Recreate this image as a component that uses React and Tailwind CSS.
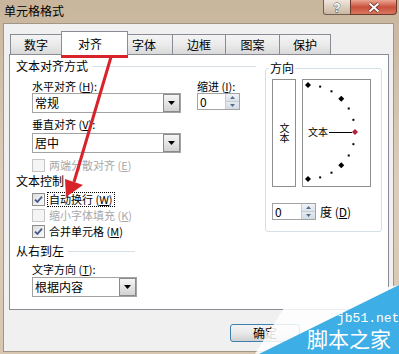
import clsx from "clsx";

const FONT = "font-['Noto_Sans_CJK_SC','Noto_Sans',sans-serif]";

function Key({ k, colon = true }) {
  return (
    <span>
      {" ("}
      <span className="underline">{k}</span>
      {")"}
      {colon ? ":" : ""}
    </span>
  );
}

function DropArrow() {
  return (
    <svg width="7" height="4" viewBox="0 0 7 4">
      <polygon points="0,0 7,0 3.5,4" fill="#000" />
    </svg>
  );
}

function Select({ value, w }) {
  return (
    <div className={clsx("h-[20px] border border-[#a3a3a3] bg-white flex items-stretch", w)}>
      <span className="flex-1 pl-[2px] text-[12px] leading-[18px]">{value}</span>
      <span className="w-[17px] border border-[#8a8a8a] bg-linear-to-b from-[#f6f6f6] to-[#d2d2d2] flex items-center justify-center">
        <DropArrow />
      </span>
    </div>
  );
}

function Spin({ value, w }) {
  return (
    <div className={clsx("h-[17px] border border-[#a3a3a3] bg-white flex items-stretch", w)}>
      <span className="flex-1 pl-[2px] text-[12px] leading-[15px]">{value}</span>
      <span className="w-[14px] flex flex-col border-l border-[#c4ccd6]">
        <span className="flex-1 flex items-center justify-center bg-linear-to-b from-[#f1f4f8] to-[#dbe2ea] border-b border-[#c4ccd6]">
          <svg width="5" height="3" viewBox="0 0 5 3">
            <polygon points="2.5,0 5,3 0,3" fill="#5a6d88" />
          </svg>
        </span>
        <span className="flex-1 flex items-center justify-center bg-linear-to-b from-[#e6ebf1] to-[#d2dae4]">
          <svg width="5" height="3" viewBox="0 0 5 3">
            <polygon points="0,0 5,0 2.5,3" fill="#5a6d88" />
          </svg>
        </span>
      </span>
    </div>
  );
}

function Check({ checked, disabled }) {
  return (
    <span
      className={clsx(
        "w-[13px] h-[13px] border flex items-center justify-center shrink-0",
        disabled
          ? "border-[#c6c6c6] bg-[#f5f5f5]"
          : "border-[#8e8f8f] bg-linear-to-br from-[#dedede] to-[#fbfbfb]"
      )}
    >
      {checked && (
        <svg width="11" height="11" viewBox="0 0 11 11">
          <path d="M2 5.6 L4.4 8 L9 2.6" fill="none" stroke="#46598c" strokeWidth="1.8" />
        </svg>
      )}
    </span>
  );
}

function CheckRow({ label, k, checked, disabled, focus, h = "h-[16px]" }) {
  return (
    <div className={clsx("flex items-center pl-[16px]", h)}>
      <Check checked={checked} disabled={disabled} />
      <span
        className={clsx(
          "ml-[2px] px-[1px] text-[11px] leading-[13px] border",
          focus ? "border-dotted border-black" : "border-transparent",
          disabled ? "text-[#a8a8a8]" : "text-black"
        )}
      >
        {label}
        <Key k={k} colon={false} />
      </span>
    </div>
  );
}

function GroupHead({ title, line }) {
  return (
    <div className="flex items-center h-[14px]">
      <span className="text-[12px] leading-[14px]">{title}</span>
      {line && <span className={clsx("h-px ml-[4px]", line)} />}
    </div>
  );
}

function Tab({ label, w, active, first, pl }) {
  return (
    <div
      className={clsx(
        "border border-b-0 border-[#898c95] flex items-center text-[12px] leading-[14px]",
        w,
        !first && "-ml-px",
        active
          ? "h-[24px] -mb-px bg-white relative z-10"
          : "h-[20px] bg-linear-to-b from-[#f4f4f4] via-[#ebebeb] to-[#d9d9d9]",
        pl ? pl : "justify-center"
      )}
    >
      {label}
    </div>
  );
}

function Dial() {
  const cx = 5;
  const cy = 52;
  const r = 47;
  const marks = [];
  for (let a = 90; a >= -90; a -= 15) {
    const rad = (a * Math.PI) / 180;
    const x = cx + r * Math.cos(rad);
    const y = cy - r * Math.sin(rad);
    if (a % 45 === 0) {
      const s = 3;
      marks.push(
        <polygon
          key={a}
          points={`${x},${y - s} ${x + s},${y} ${x},${y + s} ${x - s},${y}`}
          fill={a === 0 ? "#b3203c" : "#000"}
        />
      );
    } else {
      marks.push(<rect key={a} x={x - 1} y={y - 1} width="2" height="2" fill="#000" />);
    }
  }
  return (
    <svg width="67" height="106" viewBox="0 0 67 106">
      <text x="5" y="56" fontSize="10" fontFamily="Noto Sans CJK SC, sans-serif" fill="#000">
        文本
      </text>
      <line x1="26" y1="52.5" x2="49" y2="52.5" stroke="#000" strokeWidth="1" />
      {marks}
    </svg>
  );
}

export default function App() {
  return (
    <div
      className={clsx(
        "w-[399px] h-[354px] relative overflow-hidden bg-linear-to-b from-[#c8b59c] via-[#dccdbb] to-[#d8c6b0] text-black",
        FONT
      )}
    >
      {/* title bar */}
      <div className="h-[23px] flex items-start justify-between pl-[4px] pr-[2px]">
        <span className="mt-[4px] text-[12px] leading-[14px]">单元格格式</span>
        <div className="flex">
          <div className="w-[28px] h-[15px] border border-t-0 border-[#6e5f50] rounded-bl-[3px] bg-linear-to-b from-[#efe6dc] to-[#c9b7a2] flex items-center justify-center">
            <svg width="10" height="13" viewBox="0 0 10 13">
              <text
                x="5"
                y="11"
                textAnchor="middle"
                fontSize="12"
                fontWeight="bold"
                fontFamily="Liberation Sans, sans-serif"
                fill="#fff"
                stroke="#4a3f35"
                strokeWidth="0.8"
                paintOrder="stroke"
              >
                ?
              </text>
            </svg>
          </div>
          <div className="w-[47px] h-[15px] -ml-px border border-t-0 border-[#6e3a2e] rounded-br-[4px] bg-linear-to-b from-[#e9a595] via-[#c9503c] to-[#d9775f] flex items-center justify-center">
            <svg width="14" height="11" viewBox="0 0 14 11">
              <path d="M2.5 1.5 L11.5 9.5 M11.5 1.5 L2.5 9.5" stroke="#5a2a20" strokeWidth="3.4" />
              <path d="M2.5 1.5 L11.5 9.5 M11.5 1.5 L2.5 9.5" stroke="#fff" strokeWidth="2" />
            </svg>
          </div>
        </div>
      </div>

      {/* client area */}
      <div className="ml-[3px] w-[391px] h-[329px] bg-[#f0f0f0] border border-[#a39584] pl-[5px] pt-[7px]">
        <div className="flex items-end h-[23px] pl-[1px]">
          <Tab label="数字" w="w-[52px]" first />
          <Tab label="对齐" w="w-[67px]" active pl="pl-[16px]" />
          <Tab label="字体" w="w-[46px]" pl="pl-[4px]" />
          <Tab label="边框" w="w-[54px]" />
          <Tab label="图案" w="w-[55px]" />
          <Tab label="保护" w="w-[52px]" />
        </div>

        <div className="w-[380px] h-[256px] border border-[#898c95] bg-white flex pt-[4px]">
          {/* left column */}
          <div className="w-[246px] pl-[6px] flex flex-col">
            <GroupHead title="文本对齐方式" line="flex-1 bg-[#d5dfe5]" />
            <div className="flex pl-[16px] mt-[6px]">
              <div className="w-[149px] flex flex-col">
                <span className="text-[11px] leading-[14px]">
                  水平对齐
                  <Key k="H" />
                </span>
                <Select value="常规" w="w-[149px]" />
              </div>
              <div className="ml-[16px] flex flex-col">
                <span className="text-[11px] leading-[14px]">
                  缩进
                  <Key k="I" />
                </span>
                <Spin value="0" w="w-[43px]" />
              </div>
            </div>
            <div className="pl-[16px] mt-[4px] flex flex-col">
              <span className="text-[11px] leading-[14px]">
                垂直对齐
                <Key k="V" />
              </span>
              <div className="mt-[2px]">
                <Select value="居中" w="w-[149px]" />
              </div>
            </div>
            <div className="mt-[5px]">
              <CheckRow label="两端分散对齐" k="E" disabled h="h-[14px]" />
            </div>
            <div className="mt-[2px]">
              <GroupHead title="文本控制" />
            </div>
            <div className="mt-[3px] flex flex-col">
              <CheckRow label="自动换行" k="W" checked focus />
              <CheckRow label="缩小字体填充" k="K" disabled />
              <CheckRow label="合并单元格" k="M" checked />
            </div>
            <div className="mt-[5px]">
              <GroupHead title="从右到左" line="w-[67px] bg-[#d5dfe5]" />
            </div>
            <div className="pl-[16px] mt-[4px] flex flex-col">
              <span className="text-[11px] leading-[14px]">
                文字方向
                <Key k="T" />
              </span>
              <div className="mt-[1px]">
                <Select value="根据内容" w="w-[105px]" />
              </div>
            </div>
          </div>

          {/* orientation group */}
          <div className="ml-[9px] mt-[9px] w-[117px] h-[164px] border border-[#d5dfe5] rounded-[3px] flex flex-col">
            <span className="-mt-[8px] ml-[3px] px-[1px] w-fit bg-white text-[12px] leading-[14px]">方向</span>
            <div className="flex pl-[6px] mt-[4px]">
              <div className="w-[24px] h-[108px] border border-[#8f8f8f] flex items-center justify-center">
                <span className="[writing-mode:vertical-rl] text-[10px] leading-[12px]">文本</span>
              </div>
              <div className="ml-[6px] w-[69px] h-[108px] border border-[#8f8f8f]">
                <Dial />
              </div>
            </div>
            <div className="flex items-center pl-[6px] mt-[16px]">
              <Spin value="0" w="w-[44px]" />
              <span className="ml-[4px] text-[12px] leading-[14px]">
                度
                <Key k="D" colon={false} />
              </span>
            </div>
          </div>
        </div>

        <div className="mt-[14px] ml-[221px] w-[70px] h-[18px] rounded-[3px] border border-[#3c7fb1] bg-linear-to-b from-[#f4f4f4] via-[#e9e9e9] to-[#d0d0d0] flex items-center justify-center text-[12px] leading-[14px]">
          确定
        </div>
      </div>

      {/* red annotation */}
      <svg className="absolute inset-0 pointer-events-none" width="399" height="354" viewBox="0 0 399 354">
        <rect x="62.5" y="36.5" width="64" height="20" fill="none" stroke="#d8232b" strokeWidth="3" />
        <line x1="111" y1="57" x2="74" y2="182" stroke="#d8232b" strokeWidth="3" />
        <polygon points="66,197 65,179 83,185" fill="#d8232b" />
      </svg>

      {/* watermark */}
      <svg className="absolute inset-0 pointer-events-none" width="399" height="354" viewBox="0 0 399 354">
        <polygon points="255,354 284,308 393,286 399,285 399,354" fill="#ffffff" fillOpacity="0.85" />
        <polygon points="259,354 399,285 399,354" fill="#3eaee6" />
        <text x="337" y="322" fontSize="13" fontFamily="Liberation Mono, monospace" fill="#fff">
          jb51.net
        </text>
        <text x="307" y="347" fontSize="21" fontFamily="Noto Sans CJK SC, sans-serif" fill="#fff">
          脚本之家
        </text>
      </svg>
    </div>
  );
}
